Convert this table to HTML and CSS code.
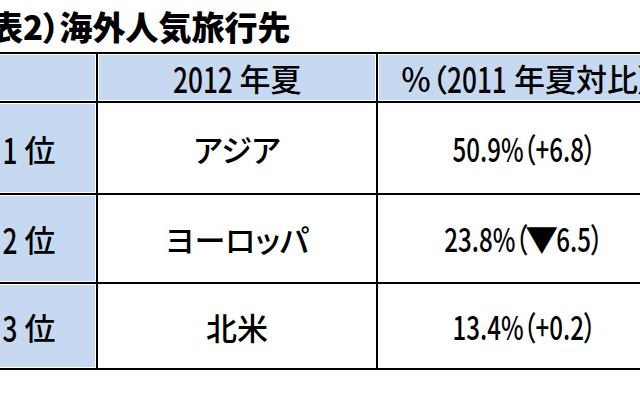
FILE: index.html
```html
<!DOCTYPE html>
<html lang="ja">
<head>
<meta charset="utf-8">
<title>表2）海外人気旅行先</title>
<link rel="stylesheet" href="styles.css">
</head>
<body>
<h1 class="title">表2）海外人気旅行先</h1>
<div class="grid">
  <div class="cell blue"></div>
  <div class="cell blue"><span class="cond c4">2012</span>&nbsp;年夏</div>
  <div class="cell blue share-head">％（<span class="cond c4">2011</span>&nbsp;年夏対比）</div>

  <div class="cell blue"><span class="cond c1">1</span>&nbsp;位</div>
  <div class="cell">アジア</div>
  <div class="cell"><span class="val">50.9%（+6.8）</span></div>

  <div class="cell blue"><span class="cond c1">2</span>&nbsp;位</div>
  <div class="cell">ヨーロッパ</div>
  <div class="cell"><span class="val">23.8%（<span class="tri">▼</span>6.5）</span></div>

  <div class="cell blue"><span class="cond c1">3</span>&nbsp;位</div>
  <div class="cell">北米</div>
  <div class="cell"><span class="val">13.4%（+0.2）</span></div>
</div>
</body>
</html>
```
FILE: styles.css
```css
html, body {
  margin: 0;
  padding: 0;
  background: #fff;
  overflow: hidden;
  width: 640px;
  height: 400px;
}
body {
  font-family: "Noto Sans CJK JP", "Noto Sans", sans-serif;
  color: #000;
  font-feature-settings: "palt";
}
.title {
  margin: 0 0 0 -10px;
  height: 52px;
  font-size: 33px;
  line-height: 52px;
  font-weight: 900;
  white-space: nowrap;
}
.grid {
  display: grid;
  grid-template-columns: 136px 280px 294px;
  grid-template-rows: 49px 92px 89px 86px;
  width: max-content;
  margin-left: -40px;
  border-top: 2px solid #000;
  border-left: 2px solid #000;
}
.cell {
  box-sizing: border-box;
  border-right: 2px solid #000;
  border-bottom: 2px solid #000;
  display: flex;
  align-items: center;
  justify-content: center;
  font-size: 31px;
  font-weight: 500;
  line-height: 1;
  white-space: nowrap;
}
.blue {
  background: #c6d9f1;
  box-shadow: inset 0 0 0 1px #fff;
}
.share-head {
  padding-left: 6px;
}
.cond {
  display: inline-block;
  font-size: 35px;
  transform: scaleX(.75);
}
.c4 { margin: 0 -0.28em; }
.c1 { margin: 0 -0.07em; }
.val {
  display: inline-block;
  font-size: 33px;
  transform: scaleX(.73);
}
.tri {
  display: inline-block;
  transform: scaleX(1.37);
  margin: 0 0.1em;
}
```
